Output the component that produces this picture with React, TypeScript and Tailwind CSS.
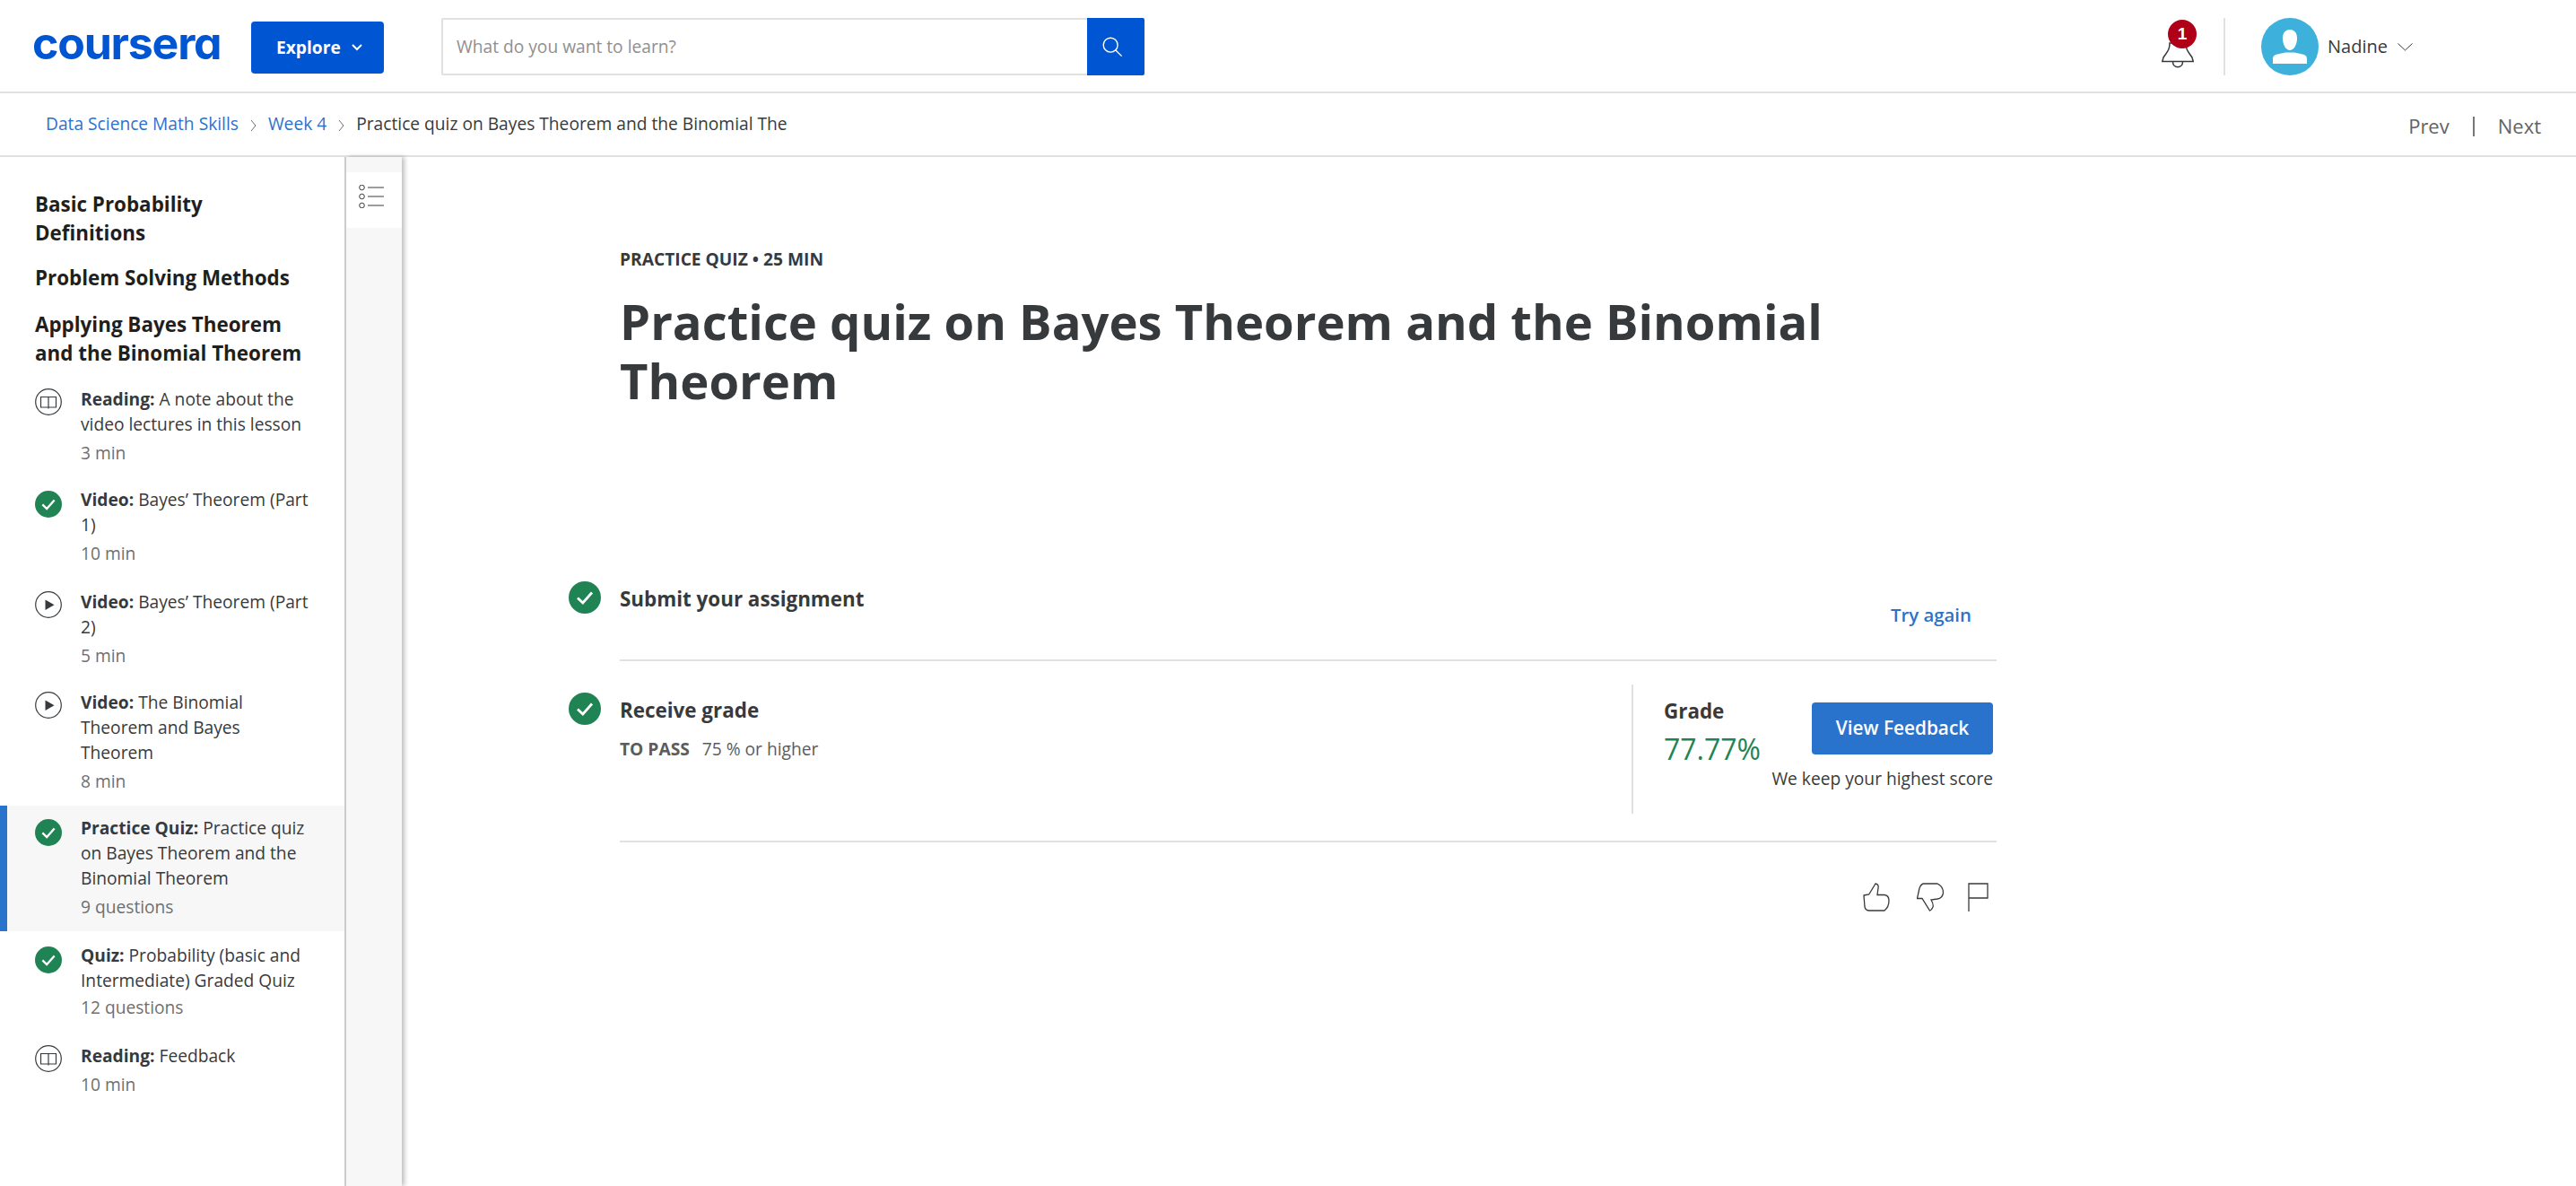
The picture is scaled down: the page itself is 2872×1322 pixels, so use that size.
import React from "react";

const ink = "#373a3c";

function Check({ className = "" }: { className?: string }) {
  return (
    <svg viewBox="0 0 36 36" className={className}>
      <circle cx="18" cy="18" r="18" fill="#1f8354" />
      <path d="M10 18.5 L15.8 24 L26 12.5" fill="none" stroke="#fff" strokeWidth="2.8" />
    </svg>
  );
}

function Book() {
  return (
    <svg viewBox="0 0 30 30" className="w-[30px] h-[30px] shrink-0 mt-[2px]" fill="none" stroke={ink} strokeWidth="1.2">
      <circle cx="15" cy="15" r="14.3" />
      <path d="M6.5 9.5 H15 V21 H6.5 Z M15 9.5 H23.5 V21 H15 Z M15 21 V22.5" />
    </svg>
  );
}

function Play() {
  return (
    <svg viewBox="0 0 30 30" className="w-[30px] h-[30px] shrink-0 mt-[2px]" fill="none">
      <circle cx="15" cy="15" r="14.3" stroke={ink} strokeWidth="1.2" />
      <path d="M11.5 9.5 L21.5 15.2 L11.5 21 Z" fill={ink} />
    </svg>
  );
}

type Item = { kind: "book" | "play" | "check"; label: string; title: string; meta: string; box: string; tight?: boolean };

const items: Item[] = [
  { kind: "book", label: "Reading:", title: "A note about the video lectures in this lesson", meta: "3 min", box: "flex pl-[39px] pt-[11px] pb-[13px]" },
  { kind: "check", label: "Video:", title: "Bayes’ Theorem (Part 1)", meta: "10 min", box: "flex pl-[39px] pt-[11px] pb-[15px]" },
  { kind: "play", label: "Video:", title: "Bayes’ Theorem (Part 2)", meta: "5 min", box: "flex pl-[39px] pt-[11px] pb-[13px]" },
  { kind: "play", label: "Video:", title: "The Binomial Theorem and Bayes Theorem", meta: "8 min", box: "flex pl-[39px] pt-[11px] pb-[13px]" },
  { kind: "check", label: "Practice Quiz:", title: "Practice quiz on Bayes Theorem and the Binomial Theorem", meta: "9 questions", box: "flex bg-[#f7f7f7] border-l-[8px] border-[#2a73cc] pl-[31px] pt-[11px] pb-[13px]" },
  { kind: "check", label: "Quiz:", title: "Probability (basic and Intermediate) Graded Quiz", meta: "12 questions", tight: true, box: "flex pl-[39px] pt-[13px] pb-[15px]" },
  { kind: "book", label: "Reading:", title: "Feedback", meta: "10 min", box: "flex pl-[39px] pt-[11px] pb-[13px]" },
];

function SideItem({ item }: { item: Item }) {
  return (
    <div className={item.box}>
      {item.kind === "book" && <Book />}
      {item.kind === "play" && <Play />}
      {item.kind === "check" && <Check className="w-[30px] h-[30px] shrink-0 mt-[4px]" />}
      <div className="ml-[21px] w-[258px]">
        <div className="text-[19.2px] leading-[28px] text-[#373a3c]">
          <span className="font-bold">{item.label}</span> {item.title}
        </div>
        <div className={item.tight ? "text-[19.2px] leading-[28px] text-[#6f6f6f] mt-[2px]" : "text-[19.2px] leading-[28px] text-[#6f6f6f] mt-[4px]"}>{item.meta}</div>
      </div>
    </div>
  );
}

function Header() {
  return (
    <header className="h-[104px] pt-[2px] border-b-2 border-[#e1e1e1] flex items-center bg-white">
      <div className="w-[280px] pl-[36px] text-[50px] leading-[60px] font-bold tracking-[-1.2px] text-[#0056d2] font-['Inter',sans-serif] [font-feature-settings:'cv11'] pb-[8px]">coursera</div>
      <button className="mt-[2px] w-[148px] h-[58px] rounded-[4px] bg-[#0056d2] text-white text-[19.2px] font-bold flex items-center pl-[28px] gap-[12px]">
        Explore
        <svg viewBox="0 0 12 8" className="w-[12px] h-[8px]" fill="none" stroke="#fff" strokeWidth="2"><path d="M1 1 L6 6 L11 1" /></svg>
      </button>
      <div className="ml-[64px] w-[784px] h-[64px] flex">
        <div className="flex-1 border-2 border-r-0 border-[#e1e1e1] rounded-l-[2px] flex items-center pl-[15px] text-[19.2px] text-[#8f8f8f]">What do you want to learn?</div>
        <div className="w-[64px] pr-[8px] bg-[#0056d2] rounded-r-[2px] flex items-center justify-center">
          <svg viewBox="0 0 26 26" className="w-[24px] h-[24px]" fill="none" stroke="#fff" strokeWidth="1.5">
            <circle cx="11" cy="11" r="8.6" />
            <path d="M17 17 L24.5 24.5" />
          </svg>
        </div>
      </div>
      <div className="ml-auto flex items-center pr-[182px]">
        <div className="relative w-[36px] h-[64px]">
          <svg viewBox="0 0 36 36" className="absolute left-0 top-[20px] w-[36px] h-[36px]" fill="none" stroke={ink} strokeWidth="1.5">
            <path d="M9 8 C9 16 6 18 2 24 L0.8 28.5 H35.2 L34 24 C30 18 27 16 27 8 Z" />
            <path d="M12.5 29 C12.5 36.5 23.5 36.5 23.5 29" />
          </svg>
          <div className="absolute left-[7px] top-[2px] w-[32px] h-[32px] rounded-full bg-[#b00017] text-white text-[19px] font-bold flex items-center justify-center font-['Liberation_Sans',sans-serif]">1</div>
        </div>
        <div className="ml-[33px] w-[2px] h-[64px] bg-[#e1e1e1]" />
        <div className="ml-[40px] w-[64px] h-[64px] rounded-full bg-[#3eb0dc] overflow-hidden">
          <svg viewBox="0 0 64 64" className="w-[64px] h-[64px]" fill="#fff">
            <path d="M32 13 C38 13 40.5 18 40 24 C39.5 31 36 36 32 36 C28 36 24.5 31 24 24 C23.5 18 26 13 32 13 Z" />
            <path d="M13 51 V46 C13 42 15 41 20 40 L27 38.5 H37 L44 40 C49 41 51 42 51 46 V51 Z" />
          </svg>
        </div>
        <div className="ml-[10px] text-[20px] text-[#373a3c]">Nadine</div>
        <svg viewBox="0 0 17 9" className="ml-[11px] w-[17px] h-[9px]" fill="none" stroke={ink} strokeWidth="1"><path d="M0.5 0.5 L8.5 8 L16.5 0.5" /></svg>
      </div>
    </header>
  );
}

function Sep() {
  return (
    <svg viewBox="0 0 7 14" className="mx-[13px] w-[7px] h-[14px] mt-[3px]" fill="none" stroke="#6f6f6f" strokeWidth="1"><path d="M1 1 L6 7 L1 13" /></svg>
  );
}

function Crumbs() {
  return (
    <div className="h-[71px] border-b-2 border-[#e1e1e1] flex items-center pl-[51px] pr-[39px] text-[19.2px] bg-white">
      <span className="text-[#2a73cc]">Data Science Math Skills</span>
      <Sep />
      <span className="text-[#2a73cc]">Week 4</span>
      <Sep />
      <span className="text-[#373a3c]">Practice quiz on Bayes Theorem and the Binomial The</span>
      <div className="ml-auto flex items-center text-[22px] text-[#636363] mt-[4px]">
        <span>Prev</span>
        <span className="mx-[26px] w-[2px] h-[22px] bg-[#777]" />
        <span>Next</span>
      </div>
    </div>
  );
}

function Sidebar() {
  return (
    <aside className="w-[386px] shrink-0 border-r-2 border-[#cfcfcf] bg-white pt-[37px]">
      <div className="pl-[39px] text-[22.4px] leading-[32px] font-bold text-[#1f1f1f]">
        <div className="mb-[18px] w-[300px]">Basic Probability Definitions</div>
        <div className="mb-[20px] w-[300px]">Problem Solving Methods</div>
        <div className="mb-[10px] w-[300px]">Applying Bayes Theorem and the Binomial Theorem</div>
      </div>
      {items.map((it, i) => (
        <SideItem key={i} item={it} />
      ))}
    </aside>
  );
}

function Rail() {
  return (
    <div className="w-[62px] shrink-0 bg-[#f7f7f7] pt-[17px] shadow-[3px_0_5px_rgba(0,0,0,0.25)]">
      <div className="h-[62px] bg-white flex items-center pl-[14px] pb-[8px] rounded-[2px]">
        <svg viewBox="0 0 28 26" className="w-[28px] h-[26px]" fill="none" stroke={ink} strokeWidth="1">
          <circle cx="3.5" cy="3" r="2.8" />
          <circle cx="3.5" cy="13" r="2.8" />
          <circle cx="3.5" cy="23" r="2.8" />
          <path d="M10 3 H28 M10 13 H28 M10 23 H28" />
        </svg>
      </div>
    </div>
  );
}

function Main() {
  return (
    <main className="flex-1 pl-[186px] pt-[100px]">
      <div className="pl-[57px] w-[1592px]">
        <div className="text-[19.2px] leading-[28px] font-bold text-[#373a3c]">PRACTICE QUIZ • 25 MIN</div>
        <h1 className="mt-[22px] text-[54.4px] leading-[66px] font-bold text-[#373a3c]">Practice quiz on Bayes Theorem and the Binomial Theorem</h1>
      </div>
      <div className="mt-[191px] flex">
        <Check className="w-[36px] h-[36px] shrink-0" />
        <div className="ml-[21px] w-[1535px] h-[89px] border-b-2 border-[#e1e1e1] flex justify-between">
          <div className="mt-[4px] text-[22.4px] leading-[32px] font-bold text-[#373a3c]">Submit your assignment</div>
          <div className="mt-[21px] mr-[28px] text-[20.4px] leading-[32px] font-semibold text-[#2a73cc]">Try again</div>
        </div>
      </div>
      <div className="flex">
        <Check className="w-[36px] h-[36px] shrink-0 mt-[35px]" />
        <div className="ml-[21px] w-[1535px] pt-[26px] pb-[30px] border-b-2 border-[#e1e1e1] flex justify-between">
          <div className="pt-[13px]">
            <div className="text-[22.4px] leading-[32px] font-bold text-[#373a3c]">Receive grade</div>
            <div className="mt-[13px] text-[19.2px] leading-[28px] text-[#5c5c5c]">
              <span className="font-bold mr-[14px]">TO PASS</span>75 % or higher
            </div>
          </div>
          <div className="w-[407px] h-[144px] border-l-2 border-[#e1e1e1] pl-[34px] pr-[4px] flex justify-between">
            <div className="pt-[16px]">
              <div className="text-[22.4px] leading-[28px] font-bold text-[#373a3c]">Grade</div>
              <div className="mt-[8px] text-[32px] leading-[40px] text-[#1f8354]">77.77%</div>
            </div>
            <div className="pt-[20px] flex flex-col items-end">
              <button className="w-[202px] h-[58px] rounded-[4px] bg-[#2a73cc] text-white text-[20.8px] font-semibold">View Feedback</button>
              <div className="mt-[13px] text-[19.2px] leading-[28px] text-[#373a3c]">We keep your highest score</div>
            </div>
          </div>
        </div>
      </div>
      <div className="mt-[45px] w-[1592px] flex justify-end pr-[9px]">
        <svg viewBox="0 0 30 32" className="w-[30px] h-[32px]" fill="none" stroke={ink} strokeWidth="1.3">
          <path d="M1 14 L6.7 13 L14 1 Q18 2 17 6 L16 13.5 H24 Q29 14 29 20 Q29 27 24 31 H7 Q3 31 2 27 Z" />
        </svg>
        <svg viewBox="0 0 30 32" className="ml-[30px] w-[30px] h-[32px]" fill="none" stroke={ink} strokeWidth="1.3">
          <path d="M0.5 17.5 L3 6 Q5 1 8 1 H23 Q29.5 4 29.5 11 Q29 17 23 18 L16 19 Q19 24 18 27 Q16 31 14.5 31 L6 17.5 Z" />
        </svg>
        <svg viewBox="0 0 23 32" className="ml-[27px] w-[23px] h-[32px]" fill="none" stroke={ink} strokeWidth="1.3">
          <path d="M1 32 V1 H22 V17 H1" />
        </svg>
      </div>
    </main>
  );
}

export default function App() {
  return (
    <div className="w-[2872px] h-[1322px] overflow-hidden bg-white font-['Open_Sans',sans-serif] flex flex-col">
      <Header />
      <Crumbs />
      <div className="flex-1 flex min-h-0">
        <Sidebar />
        <Rail />
        <Main />
      </div>
    </div>
  );
}
